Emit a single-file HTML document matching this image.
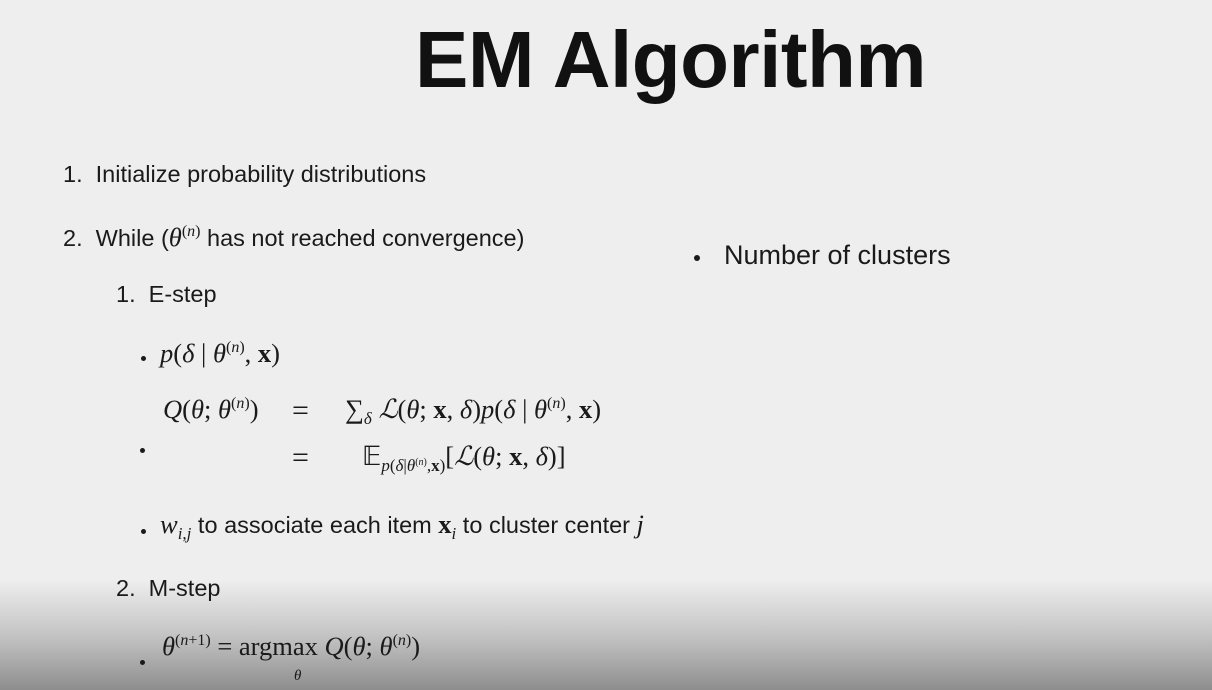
<!DOCTYPE html>
<html><head><style>
body{margin:0;width:1212px;height:690px;overflow:hidden;background:#eeeeee;position:relative;font-family:"Liberation Sans",sans-serif;color:#1a1a1a}
.g{position:absolute;left:0;top:580px;width:1212px;height:110px;background:linear-gradient(#eeeeee00,#c4c4c4 50%,#8e8e8e)}
.t{position:absolute;white-space:nowrap;font-size:23.5px}
.m{font-family:"Liberation Serif",serif;font-size:26.5px}
i{font-style:italic}
sup{font-size:16px;vertical-align:10px}
sub{font-size:17px;vertical-align:-6px}
.b{position:absolute;width:6px;height:6px;border-radius:50%;background:#1a1a1a}
</style></head><body>
<div class="g"></div>
<div class="t" style="left:415px;top:14px;font-size:80px;font-weight:bold;letter-spacing:-0.5px;color:#111">EM Algorithm</div>
<div class="t" style="left:63px;top:161px">1.&nbsp; Initialize probability distributions</div>
<div class="t" style="left:63px;top:222px">2.&nbsp; While (<span class="m"><i>θ</i><sup>(<i>n</i>)</sup></span> has not reached convergence)</div>
<div class="b" style="left:694px;top:255px"></div>
<div class="t" style="left:724px;top:240px;font-size:27px">Number of clusters</div>
<div class="t" style="left:116px;top:281px">1.&nbsp; E-step</div>
<div class="b" style="left:141px;top:356px;width:5px;height:5px"></div>
<div class="t m" style="left:160px;top:338px"><i>p</i>(<i>δ</i> | <i>θ</i><sup>(<i>n</i>)</sup>, <b>x</b>)</div>
<div class="b" style="left:140px;top:448px;width:5px;height:5px"></div>
<div class="t m" style="left:163px;top:394px"><i>Q</i>(<i>θ</i>; <i>θ</i><sup>(<i>n</i>)</sup>)</div>
<div class="t m" style="left:292px;top:396px;font-size:30px;line-height:30px">=</div>
<div class="t m" style="left:345px;top:394px">∑<sub><i>δ</i></sub> <i>ℒ</i>(<i>θ</i>; <b>x</b>, <i>δ</i>)<i>p</i>(<i>δ</i> | <i>θ</i><sup>(<i>n</i>)</sup>, <b>x</b>)</div>
<div class="t m" style="left:292px;top:443px;font-size:30px;line-height:30px">=</div>
<div class="t m" style="left:362px;top:441px">𝔼<sub style="font-size:17px"><i>p</i>(<i>δ</i>|<i>θ</i><sup style="font-size:10px;vertical-align:6px">(<i>n</i>)</sup>,<b>x</b>)</sub>[<i>ℒ</i>(<i>θ</i>; <b>x</b>, <i>δ</i>)]</div>
<div class="b" style="left:141px;top:529px;width:5px;height:5px"></div>
<div class="t" style="left:160px;top:509px"><span class="m"><i>w</i><sub><i>i</i>,<i>j</i></sub></span> to associate each item <span class="m"><b>x</b><sub><i>i</i></sub></span> to cluster center <span class="m"><i>j</i></span></div>
<div class="t" style="left:116px;top:575px">2.&nbsp; M-step</div>
<div class="b" style="left:140px;top:660px;width:5px;height:5px"></div>
<div class="t m" style="left:162px;top:631px"><i>θ</i><sup>(<i>n</i>+1)</sup> = argmax <i>Q</i>(<i>θ</i>; <i>θ</i><sup>(<i>n</i>)</sup>)</div>
<div class="t m" style="left:294px;top:668px;font-size:15px"><i>θ</i></div>
</body></html>
